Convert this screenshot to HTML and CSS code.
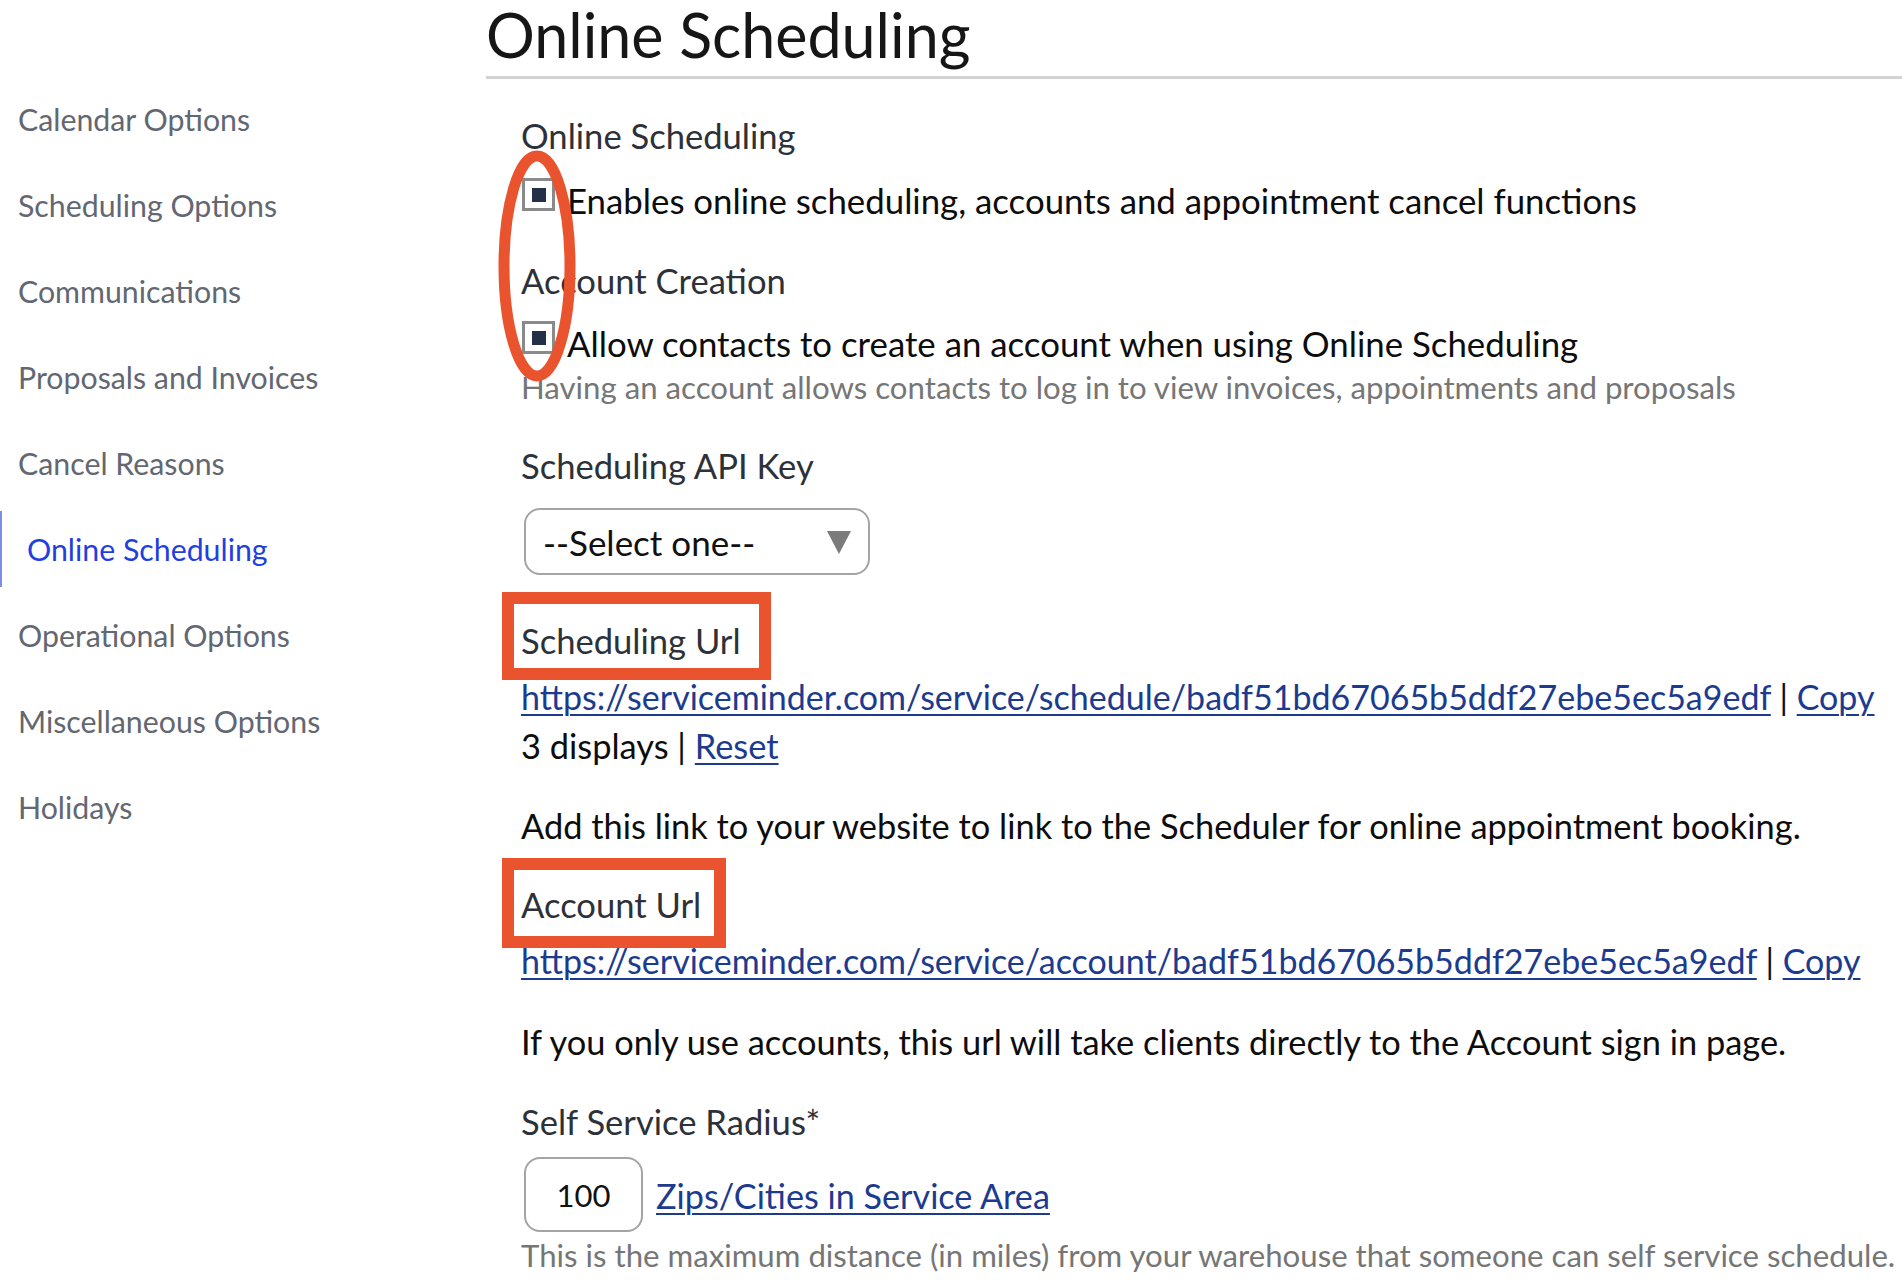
FILE: index.html
```html
<!DOCTYPE html>
<html lang="en">
<head>
<meta charset="utf-8">
<title>Online Scheduling</title>
<link rel="stylesheet" href="styles.css">
</head>
<body>
<div class="page">
  <nav class="sidebar">
    <a class="nav-item" href="#">Calendar Options</a>
    <a class="nav-item" href="#">Scheduling Options</a>
    <a class="nav-item" href="#">Communications</a>
    <a class="nav-item" href="#">Proposals and Invoices</a>
    <a class="nav-item" href="#">Cancel Reasons</a>
    <a class="nav-item active" href="#">Online Scheduling</a>
    <a class="nav-item" href="#">Operational Options</a>
    <a class="nav-item" href="#">Miscellaneous Options</a>
    <a class="nav-item" href="#">Holidays</a>
  </nav>

  <main class="main">
    <h1 class="page-title">Online Scheduling</h1>

    <div class="content">
      <h2 class="label gap-35">Online Scheduling</h2>
      <div class="check-row gap-24">
        <span class="checkbox"><span class="check-fill"></span></span>
        <span class="text text-lg">Enables online scheduling, accounts and appointment cancel functions</span>
      </div>

      <h2 class="label gap-40">Account Creation</h2>
      <div class="check-row gap-22">
        <span class="checkbox"><span class="check-fill"></span></span>
        <span class="text text-lg">Allow contacts to create an account when using Online Scheduling</span>
      </div>
      <p class="hint gap-4">Having an account allows contacts to log in to view invoices, appointments and proposals</p>

      <h2 class="label gap-40">Scheduling API Key</h2>
      <div class="select gap-24">
        <span class="select-value">--Select one--</span>
        <svg class="select-arrow" width="24" height="23" viewBox="0 0 24 23"><polygon points="0,0 24,0 12,23" fill="#7b7b7b"/></svg>
      </div>

      <h2 class="label marked mark-a gap-44">Scheduling Url</h2>
      <p class="text url-line gap-16"><a class="link" href="#">https://serviceminder.com/service/schedule/badf51bd67065b5ddf27ebe5ec5a9edf</a> | <a class="link" href="#">Copy</a></p>
      <p class="text gap-9">3 displays | <a class="link" href="#">Reset</a></p>
      <p class="text gap-40">Add this link to your website to link to the Scheduler for online appointment booking.</p>

      <h2 class="label marked mark-b gap-39">Account Url</h2>
      <p class="text url-line gap-16"><a class="link" href="#">https://serviceminder.com/service/account/badf51bd67065b5ddf27ebe5ec5a9edf</a> | <a class="link" href="#">Copy</a></p>
      <p class="text gap-41">If you only use accounts, this url will take clients directly to the Account sign in page.</p>

      <h2 class="label gap-40">Self Service Radius*</h2>
      <div class="radius-row gap-17">
        <span class="number-input">100</span>
        <a class="link" href="#">Zips/Cities in Service Area</a>
      </div>
      <p class="hint gap-2">This is the maximum distance (in miles) from your warehouse that someone can self service schedule.</p>
    </div>

    <svg class="mark-ellipse" width="80" height="234" viewBox="0 0 80 234">
      <ellipse cx="40" cy="116" rx="33" ry="110" fill="none" stroke="#e9542f" stroke-width="11"/>
    </svg>
  </main>
</div>
</body>
</html>
```
FILE: styles.css
```css
html, body {
  margin: 0;
  padding: 0;
  background: #ffffff;
}

body {
  font-family: "Lato", "Liberation Sans", sans-serif;
  color: #111111;
  overflow: hidden;
}

.page {
  display: grid;
  grid-template-columns: 486px 1fr;
  min-height: 1286px;
}

/* Sidebar */
.sidebar {
  display: flex;
  flex-direction: column;
  padding-top: 76px;
}

.nav-item {
  display: block;
  font-size: 30.3px;
  line-height: 36px;
  padding: 25px 0 25px 18px;
  color: #626772;
  text-decoration: none;
  white-space: nowrap;
}

.nav-item.active {
  margin: 5px 0;
  padding: 20px 0 20px 25px;
  border-left: 2px solid #7d8de6;
  color: #1f3fe0;
}

/* Main */
.main {
  position: relative;
  min-width: 0;
}

.page-title {
  margin: 0;
  font-size: 61px;
  font-weight: 400;
  line-height: 70px;
  padding-bottom: 6px;
  border-bottom: 3px solid #d3d3d3;
  color: #161616;
  white-space: nowrap;
}

.content {
  display: flex;
  flex-direction: column;
  align-items: flex-start;
  padding-left: 35px;
}

.content > * {
  margin: 0;
}

/* text blocks: glyphs sit 2px lower inside their 40px line without changing the flow */
.label,
.text,
.hint {
  padding-top: 2px;
  margin-bottom: -2px !important;
  white-space: nowrap;
}

.label {
  position: relative;
  font-size: 34.6px;
  font-weight: 400;
  line-height: 40px;
  color: #2d3139;
}

.text {
  font-size: 34.4px;
  line-height: 40px;
  color: #0d0d0d;
}

.text-lg {
  font-size: 34.8px;
}

.url-line {
  font-size: 34px;
}

.hint {
  font-size: 31.2px;
  line-height: 38px;
  color: #767676;
}

.link {
  color: #1d3b8e;
  text-decoration: underline;
  text-decoration-thickness: 2px;
  text-underline-offset: 4px;
}

/* Checkbox rows */
.check-row {
  display: flex;
  align-items: flex-start;
  gap: 12px;
}

.check-row .text {
  margin-top: 1px;
}

.checkbox {
  box-sizing: border-box;
  width: 33px;
  height: 33px;
  margin-left: 1px;
  border: 3px solid #8a8a8a;
  background: #ffffff;
  display: flex;
  align-items: center;
  justify-content: center;
  flex: none;
}

.check-fill {
  width: 14px;
  height: 14px;
  background: #243045;
}

/* Select */
.select {
  box-sizing: border-box;
  width: 346px;
  height: 67px;
  margin-left: 3px !important;
  border: 2px solid #a4a4a4;
  border-radius: 16px;
  display: flex;
  align-items: center;
  justify-content: space-between;
  padding: 0 17px 0 17px;
}

.select-value {
  font-size: 35px;
  line-height: 42px;
  color: #111111;
}

.select-arrow {
  display: block;
  margin-top: 1px;
}

/* Radius input */
.radius-row {
  display: flex;
  align-items: center;
  gap: 13px;
  font-size: 34.2px;
  line-height: 40px;
  white-space: nowrap;
}

.radius-row .link {
  padding-top: 3px;
}

.number-input {
  box-sizing: border-box;
  width: 119px;
  height: 75px;
  margin-left: 3px;
  border: 2px solid #a4a4a4;
  border-radius: 16px;
  display: flex;
  align-items: center;
  justify-content: center;
  font-size: 31px;
  color: #111111;
}

/* Annotations */
.marked::after {
  content: "";
  position: absolute;
  border: 12px solid #e9542f;
  pointer-events: none;
}

.mark-a::after {
  top: -27px;
  left: -19px;
  right: -30px;
  bottom: -19px;
}

.mark-b::after {
  top: -25px;
  left: -19px;
  right: -25px;
  bottom: -23px;
}

.mark-ellipse {
  position: absolute;
  left: 11px;
  top: 150px;
}

/* Vertical spacing */
.gap-2 { margin-top: 2px !important; }
.gap-4 { margin-top: 4px !important; }
.gap-9 { margin-top: 9px !important; }
.gap-16 { margin-top: 16px !important; }
.gap-17 { margin-top: 17px !important; }
.gap-22 { margin-top: 22px !important; }
.gap-24 { margin-top: 24px !important; }
.gap-35 { margin-top: 35px !important; }
.gap-39 { margin-top: 39px !important; }
.gap-40 { margin-top: 40px !important; }
.gap-41 { margin-top: 41px !important; }
.gap-44 { margin-top: 44px !important; }
```
